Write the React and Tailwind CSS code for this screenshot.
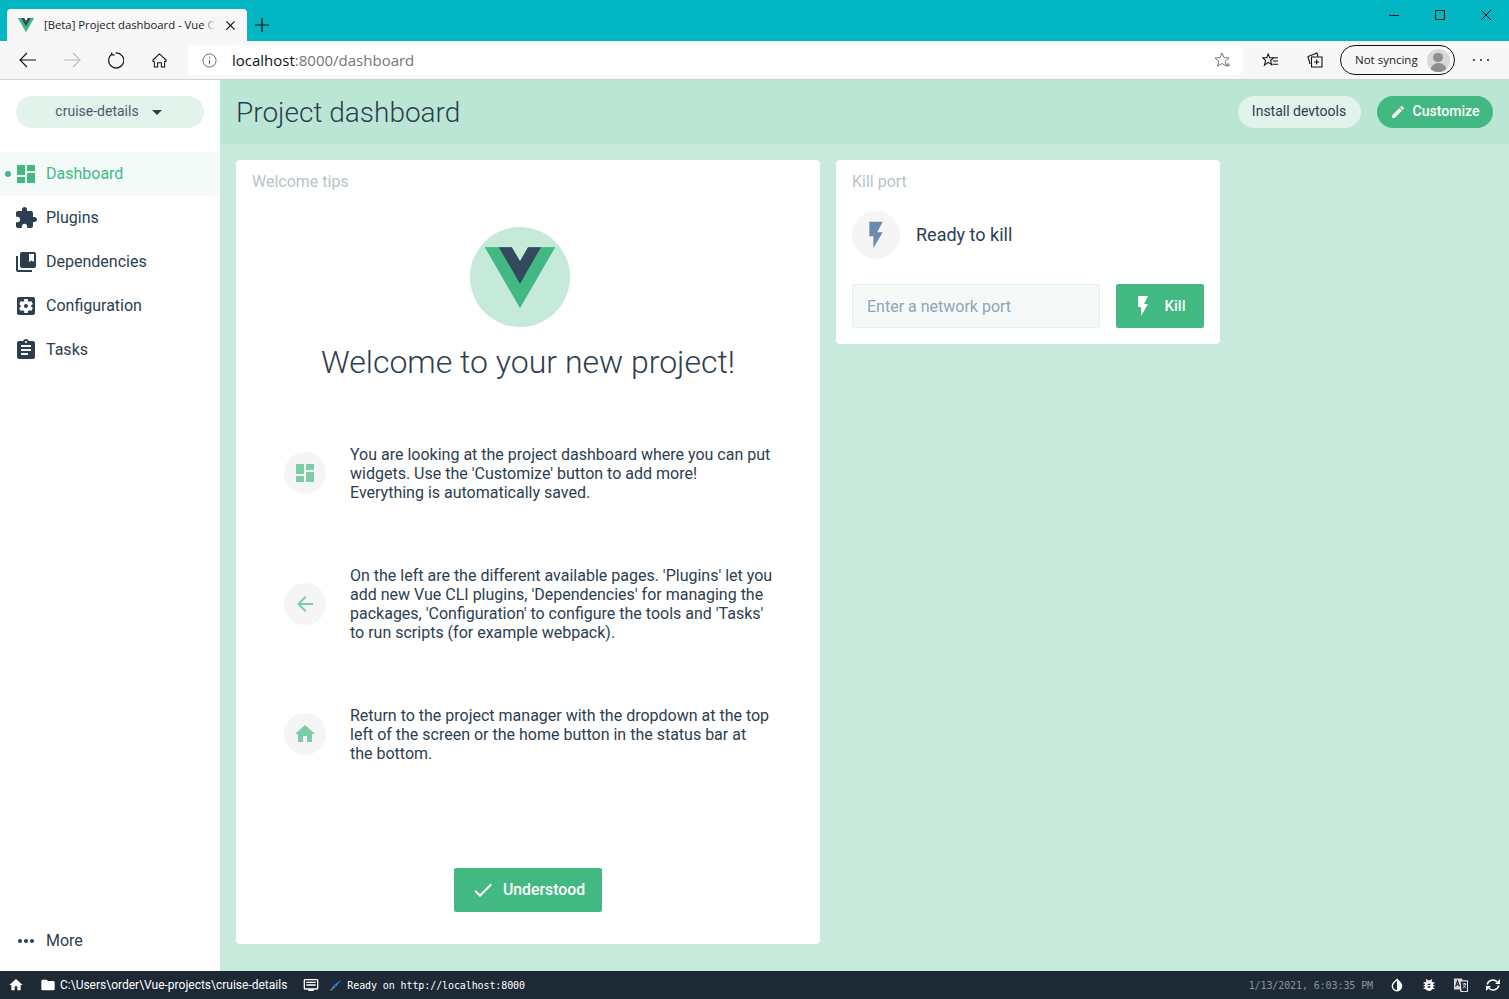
import React from "react";

const paths = {
  dashboard: "M3 13h8V3H3v10zm0 8h8v-6H3v6zm10 0h8V11h-8v10zm0-18v6h8V3h-8z",
  extension: "M20.5 11H19V7c0-1.1-.9-2-2-2h-4V3.5C13 2.12 11.88 1 10.5 1S8 2.12 8 3.5V5H4c-1.1 0-1.99.9-1.99 2v3.8H3.5c1.49 0 2.7 1.21 2.7 2.7s-1.21 2.7-2.7 2.7H2V20c0 1.1.9 2 2 2h3.8v-1.5c0-1.49 1.21-2.7 2.7-2.7 1.49 0 2.7 1.21 2.7 2.7V22H17c1.1 0 2-.9 2-2v-4h1.5c1.38 0 2.5-1.12 2.5-2.5S21.88 11 20.5 11z",
  bookmarks: "M4 6H2v14c0 1.1.9 2 2 2h14v-2H4V6zm16-4H8c-1.1 0-2 .9-2 2v12c0 1.1.9 2 2 2h12c1.1 0 2-.9 2-2V4c0-1.1-.9-2-2-2zm0 10l-2.5-1.5L15 12V4h5v8z",
  settings: "M12 10c-1.1 0-2 .9-2 2s.9 2 2 2 2-.9 2-2-.9-2-2-2zm7-7H5c-1.11 0-2 .9-2 2v14c0 1.1.89 2 2 2h14c1.11 0 2-.9 2-2V5c0-1.1-.89-2-2-2zm-1.75 9c0 .23-.02.46-.05.68l1.48 1.16c.13.11.17.3.08.45l-1.4 2.42c-.09.15-.27.21-.43.15l-1.74-.7c-.36.28-.76.51-1.18.69l-.26 1.85c-.03.17-.18.3-.35.3h-2.8c-.17 0-.32-.13-.35-.29l-.26-1.85c-.43-.18-.82-.41-1.18-.69l-1.74.7c-.16.06-.34 0-.43-.15l-1.4-2.42c-.09-.15-.05-.34.08-.45l1.48-1.16c-.03-.23-.05-.46-.05-.69 0-.23.02-.46.05-.68l-1.48-1.16c-.13-.11-.17-.3-.08-.45l1.4-2.42c.09-.15.27-.21.43-.15l1.74.7c.36-.28.76-.51 1.18-.69l.26-1.85c.03-.17.18-.3.35-.3h2.8c.17 0 .32.13.35.29l.26 1.85c.43.18.82.41 1.18.69l1.74-.7c.16-.06.34 0 .43.15l1.4 2.42c.09.15.05.34-.08.45l-1.48 1.16c.03.23.05.46.05.69z",
  assignment: "M19 3h-4.18C14.4 1.84 13.3 1 12 1c-1.3 0-2.4.84-2.82 2H5c-1.1 0-2 .9-2 2v14c0 1.1.9 2 2 2h14c1.1 0 2-.9 2-2V5c0-1.1-.9-2-2-2zm-7 0c.55 0 1 .45 1 1s-.45 1-1 1-1-.45-1-1 .45-1 1-1zm2 14H7v-2h7v2zm3-4H7v-2h10v2zm0-4H7V7h10v2z",
  flash: "M7 2v11h3v9l7-12h-4l4-8z",
  home: "M10 20v-6h4v6h5v-8h3L12 3 2 12h3v8z",
  back: "M20 11H7.83l5.59-5.59L12 4l-8 8 8 8 1.41-1.41L7.83 13H20v-2z",
  edit: "M3 17.25V21h3.75L17.81 9.94l-3.75-3.75L3 17.25zM20.71 7.04c.39-.39.39-1.02 0-1.41l-2.34-2.34c-.39-.39-1.02-.39-1.41 0l-1.83 1.83 3.75 3.75 1.83-1.83z",
  folder: "M10 4H4c-1.1 0-1.99.9-1.99 2L2 18c0 1.1.9 2 2 2h16c1.1 0 2-.9 2-2V8c0-1.1-.9-2-2-2h-8l-2-2z",
  more: "M6 10c-1.1 0-2 .9-2 2s.9 2 2 2 2-.9 2-2-.9-2-2-2zm12 0c-1.1 0-2 .9-2 2s.9 2 2 2 2-.9 2-2-.9-2-2-2zm-6 0c-1.1 0-2 .9-2 2s.9 2 2 2 2-.9 2-2-.9-2-2-2z",
  bug: "M20 8h-2.81c-.45-.78-1.07-1.45-1.82-1.96L17 4.41 15.59 3l-2.17 2.17C12.96 5.06 12.49 5 12 5c-.49 0-.96.06-1.41.17L8.41 3 7 4.41l1.62 1.63C7.88 6.55 7.26 7.22 6.81 8H4v2h2.09c-.05.33-.09.66-.09 1v1H4v2h2v1c0 .34.04.67.09 1H4v2h2.81c1.04 1.79 2.97 3 5.19 3s4.15-1.21 5.19-3H20v-2h-2.09c.05-.33.09-.66.09-1v-1h2v-2h-2v-1c0-.34-.04-.67-.09-1H20V8zm-6 8h-4v-2h4v2zm0-4h-4v-2h4v2z",
  invert: "M17.66 7.93L12 2.27 6.34 7.93c-3.12 3.12-3.12 8.19 0 11.31C7.9 20.8 9.95 21.58 12 21.58c2.05 0 4.1-.78 5.66-2.34 3.12-3.12 3.12-8.19 0-11.31zM12 19.59c-1.6 0-3.11-.62-4.24-1.76C6.62 16.69 6 15.19 6 13.59s.62-3.11 1.76-4.24L12 5.1v14.49z",
  message: "M21 3H3c-1.1 0-2 .9-2 2v12c0 1.1.9 2 2 2h5v2h8v-2h5c1.1 0 2-.9 2-2V5c0-1.1-.9-2-2-2zm0 14H3V5h18v12zM5 7h14v2H5zm0 4h14v2H5z",
  caret: "M7 10l5 5 5-5z",
  check: "M9 16.17L4.83 12l-1.42 1.41L9 19 21 7l-1.41-1.41z",
};

function Icon({ name, className }) {
  return (
    <svg viewBox="0 0 24 24" className={className} fill="currentColor">
      <path d={paths[name]} />
    </svg>
  );
}

function VueLogo({ className }) {
  return (
    <svg viewBox="0 0 256 221" className={className}>
      <path fill="#42b983" d="M204.8 0H256L128 220.8 0 0h97.92L128 51.2 157.44 0h47.36z" />
      <path fill="#42b983" d="M0 0l128 220.8L256 0h-51.2L128 132.48 50.56 0H0z" />
      <path fill="#35495e" d="M50.56 0L128 133.12 204.8 0h-47.36L128 51.2 97.92 0H50.56z" />
    </svg>
  );
}

function BrowserChrome() {
  return (
    <div className="shrink-0 font-['Open_Sans',sans-serif]">
      {/* Tab strip */}
      <div className="h-[41px] bg-[#02b6c4] flex items-end pl-[7px]">
        <div className="w-[240px] h-[32px] bg-[#f7f7f7] rounded-t-[4px] flex items-center pl-[11px]">
          <VueLogo className="w-[16px] h-[14px] shrink-0" />
          <div className="relative ml-[10px] w-[172px] whitespace-nowrap text-[11.3px] text-[#222]">
            [Beta] Project dashboard - Vue C
            <div className="absolute inset-y-0 right-0 w-[14px] bg-gradient-to-r from-transparent to-[#f7f7f7]" />
          </div>
          <svg viewBox="0 0 10 10" className="ml-[10px] w-[9px] h-[9px]" stroke="#111" strokeWidth="1.3">
            <path d="M0.5 0.5l9 9M9.5 0.5l-9 9" />
          </svg>
        </div>
        <svg viewBox="0 0 14 14" className="ml-[8px] mb-[9px] w-[14px] h-[14px]" stroke="#111" strokeWidth="1.2">
          <path d="M7 0v14M0 7h14" />
        </svg>
        <div className="ml-auto self-start flex mt-[10px] pr-[18px] gap-[36px]">
          <svg viewBox="0 0 10 10" className="w-[10px] h-[10px]" stroke="#111"><path d="M0 5.5h10" /></svg>
          <svg viewBox="0 0 10 10" className="w-[10px] h-[10px]" stroke="#111" fill="none"><path d="M.5.5h9v9h-9z" /></svg>
          <svg viewBox="0 0 10 10" className="w-[10px] h-[10px]" stroke="#111"><path d="M0 0l10 10M10 0L0 10" /></svg>
        </div>
      </div>
      {/* Address toolbar */}
      <div className="h-[39px] bg-[#f7f7f7] border-b border-[#d2d2d2] flex items-center">
        <div className="w-[188px] flex items-center pl-[19px]">
          <svg viewBox="0 0 18 16" className="w-[18px] h-[16px]" fill="none" stroke="#111" strokeWidth="1.1"><path d="M17 8H1M8 1L1 8l7 7" /></svg>
          <svg viewBox="0 0 18 16" className="ml-[26px] w-[18px] h-[16px]" fill="none" stroke="#bbb" strokeWidth="1.1"><path d="M1 8h16M10 1l7 7-7 7" /></svg>
          <svg viewBox="0 0 18 18" className="ml-[26px] w-[17px] h-[17px]" fill="none" stroke="#111" strokeWidth="1.2"><path d="M5.5 2.2A8 8 0 1 0 9 1M5 .5v2.6h3" /></svg>
          <svg viewBox="0 0 16 16" className="ml-[28px] w-[15px] h-[15px]" fill="none" stroke="#111" strokeWidth="1.1"><path d="M8 1L1 7.5V9h1.5v6H6v-4.5h4V15h3.5V9H15V7.5z" /></svg>
        </div>
        <div className="w-[1054px] h-[30px] bg-white rounded-[4px] flex items-center pl-[14px] pr-[12px]">
          <svg viewBox="0 0 16 16" className="w-[15px] h-[15px]" fill="none" stroke="#666"><circle cx="8" cy="8" r="7" /><path d="M8 7v5M8 4v1.6" /></svg>
          <div className="ml-[15px] text-[15px] text-[#111]">
            localhost<span className="text-[#767676]">:8000/dashboard</span>
          </div>
          <svg viewBox="0 0 16 16" className="ml-auto w-[16px] h-[16px]" fill="none" stroke="#777"><path d="M8 1l2 4.6 5 .4-3.8 3.2 1.2 4.9L8 11.5 3.6 14l1.2-4.8L1 6l5-.4z" /><path d="M12 13h4M14 11v4" /></svg>
        </div>
        <svg viewBox="0 0 18 16" className="ml-[20px] w-[17px] h-[15px]" fill="none" stroke="#111" strokeWidth="1.1"><path d="M6.5 1l1.5 4h4.5L9 8l1.2 4.5L6.5 10l-4 3 1.3-5L.6 5h4.4zM12 5h5M11.5 8.5H17M11 12h6" /></svg>
        <svg viewBox="0 0 16 16" className="ml-[28px] w-[16px] h-[16px]" fill="none" stroke="#111" strokeWidth="1.1"><path d="M3 12L1 4.5 10 1l1 3.5" /><path d="M4.5 5h10.5v10H4.5zM9.7 7.5v5M7.2 10h5" /></svg>
        <div className="ml-[17px] w-[115px] h-[30px] border border-[#111] rounded-full flex items-center pl-[14px] text-[11.5px] text-[#222]">
          Not syncing
          <div className="ml-[9px] w-[23px] h-[23px] rounded-full bg-[#d8d8d8] overflow-hidden flex flex-col items-center">
            <div className="mt-[4px] w-[10px] h-[10px] rounded-full bg-[#8f8f8f]" />
            <div className="mt-[1px] w-[17px] h-[10px] rounded-t-full bg-[#8f8f8f]" />
          </div>
        </div>
        <div className="ml-[18px] flex gap-[3px]">
          <div className="w-[2px] h-[2px] rounded-full bg-[#222]" />
          <div className="w-[2px] h-[2px] rounded-full bg-[#222] ml-[2px]" />
          <div className="w-[2px] h-[2px] rounded-full bg-[#222] ml-[2px]" />
        </div>
      </div>
    </div>
  );
}

function NavItem({ icon, label, active }) {
  return (
    <div className={`relative h-[44px] flex items-center pl-[14px] text-[16px] ${active ? "bg-[#f3faf7] text-[#42b983]" : "text-[#2c3e50]"}`}>
      {active && <div className="absolute left-[5px] top-[19px] w-[6px] h-[6px] rounded-full bg-[#42b983]" />}
      <Icon name={icon} className="w-[24px] h-[24px]" />
      <span className="ml-[8px]">{label}</span>
    </div>
  );
}

function Sidebar() {
  return (
    <aside className="w-[220px] shrink-0 bg-white flex flex-col">
      <div className="mx-[16px] mt-[16px] h-[32px] rounded-full bg-[#e2f3ec] flex items-center justify-center text-[14px] text-[#4a5c6c] pl-[4px] pb-[1px]">
        cruise-details
        <Icon name="caret" className="ml-[6px] w-[24px] h-[24px] mt-[1px] text-[#2c3e50]" />
      </div>
      <nav className="mt-[24px]">
        <NavItem icon="dashboard" label="Dashboard" active />
        <NavItem icon="extension" label="Plugins" />
        <NavItem icon="bookmarks" label="Dependencies" />
        <NavItem icon="settings" label="Configuration" />
        <NavItem icon="assignment" label="Tasks" />
      </nav>
      <div className="mt-auto mb-[8px]">
        <NavItem icon="more" label="More" />
      </div>
    </aside>
  );
}

function Tip({ icon, children }) {
  return (
    <div className="flex items-center">
      <div className="w-[42px] h-[42px] mb-[1px] rounded-full bg-[#f5f5f5] flex items-center justify-center shrink-0 text-[#7bcda8]">
        <Icon name={icon} className="w-[24px] h-[24px]" />
      </div>
      <p className="ml-[24px] w-[422.5px] text-[16px] leading-[19px] text-[#2c3e50]">{children}</p>
    </div>
  );
}

function WelcomeCard() {
  return (
    <section className="w-[584px] h-[784px] bg-white rounded-[4px] flex flex-col">
      <h2 className="pl-[16px] pt-[13px] text-[16px] leading-[18px] text-[#b7c4c9]">Welcome tips</h2>
      <div className="mt-[36px] mr-[16px] self-center w-[100px] h-[100px] rounded-full bg-[#c6eada] flex items-center justify-center">
        <VueLogo className="w-[70px] h-[61px] mt-[1px]" />
      </div>
      <h1 className="mt-[15px] text-center text-[32px] leading-[40px] font-light text-[#2c3e50]">
        Welcome to your new project!
      </h1>
      <div className="mt-[63px] pl-[48px] flex flex-col gap-[64px]">
        <Tip icon="dashboard">
          You are looking at the project dashboard where you can put widgets. Use the 'Customize' button to add more! Everything is automatically saved.
        </Tip>
        <Tip icon="back">
          On the left are the different available pages. 'Plugins' let you add new Vue CLI plugins, 'Dependencies' for managing the packages, 'Configuration' to configure the tools and 'Tasks' to run scripts (for example webpack).
        </Tip>
        <Tip icon="home">
          Return to the project manager with the dropdown at the top left of the screen or the home button in the status bar at the bottom.
        </Tip>
      </div>
      <button className="mt-auto mb-[32px] self-center w-[148px] h-[44px] rounded-[2px] bg-[#42b983] text-white text-[15.8px] font-medium flex items-center justify-center">
        <Icon name="check" className="w-[24px] h-[24px] mr-[8px]" />
        Understood
      </button>
    </section>
  );
}

function KillCard() {
  return (
    <section className="w-[384px] h-[184px] bg-white rounded-[4px] px-[16px]">
      <h2 className="pt-[13px] text-[16px] leading-[18px] text-[#b7c4c9]">Kill port</h2>
      <div className="mt-[20px] flex items-center">
        <div className="w-[48px] h-[48px] rounded-full bg-[#f5f5f5] flex items-center justify-center text-[#6a8bad]">
          <Icon name="flash" className="w-[32px] h-[32px]" />
        </div>
        <span className="ml-[16px] text-[18px] text-[#2c3e50] pb-[2px]">Ready to kill</span>
      </div>
      <div className="mt-[25px] flex gap-[16px]">
        <input
          placeholder="Enter a network port"
          className="w-[248px] h-[44px] px-[14px] bg-[#f5faf8] border border-[#e2f3ec] rounded-[2px] text-[16px] placeholder:text-[#8ea4bb] outline-none"
        />
        <button className="w-[88px] h-[44px] rounded-[2px] bg-[#42b983] text-white text-[15px] font-medium flex items-center justify-center pr-[4px]">
          <Icon name="flash" className="w-[24px] h-[24px] mr-[10px]" />
          Kill
        </button>
      </div>
    </section>
  );
}

function StatusBar() {
  return (
    <footer className="h-[28px] shrink-0 bg-[#1d2935] text-white flex items-center pl-[8px] pr-[8px]">
      <Icon name="home" className="w-[16px] h-[16px]" />
      <Icon name="folder" className="ml-[16px] w-[16px] h-[16px]" />
      <span className="ml-[4px] text-[12px]">C:\Users\order\Vue-projects\cruise-details</span>
      <Icon name="message" className="ml-[16px] w-[16px] h-[16px]" />
      <svg viewBox="0 0 12 12" className="ml-[10px] w-[13px] h-[13px]">
        <path fill="#2f8fe0" d="M11.5 .5L5 5.5l1.5 1.5L11.5 .5z" />
        <path fill="#2f8fe0" d="M4.5 5.8L2.6 8.4l1.2 1.1 2.3-2.2z" />
        <path fill="#e8c14a" d="M2.3 8.8L1 11l2.4-1.2z" />
      </svg>
      <span className="ml-[5px] font-['DejaVu_Sans_Mono',monospace] text-[10px] tracking-[-0.1px]">Ready on http://localhost:8000</span>
      <span className="ml-auto font-['DejaVu_Sans_Mono',monospace] text-[10px] tracking-[-0.1px] text-[#8a949c]">1/13/2021, 6:03:35 PM</span>
      <Icon name="invert" className="ml-[16px] w-[16px] h-[16px]" />
      <Icon name="bug" className="ml-[16px] w-[16px] h-[16px]" />
      <svg viewBox="0 0 16 16" className="ml-[16px] w-[16px] h-[16px]">
        <path fill="#d9d9d9" d="M1 1.5h8l.6 2H15v11.5H7.5L6.8 12.5H1z" />
        <path fill="#1d2935" stroke="#fff" strokeWidth=".8" d="M7 4h7.5v10.5H8.2z" />
        <path fill="none" stroke="#1d2935" strokeWidth="1.1" d="M2.6 9.5L4.5 4l1.9 5.5M3.3 7.8h2.4" />
        <path fill="none" stroke="#fff" strokeWidth=".8" d="M9.5 7h4M11.5 6v1M12.7 7c-.4 1.8-1.4 3-2.9 4M10.5 8.5c.5 1 1.3 1.8 2.7 2.3" />
      </svg>
      <svg viewBox="0 0 16 16" className="ml-[16px] w-[16px] h-[16px]" fill="none" stroke="#fff" strokeWidth="1.4">
        <path d="M2.2 7.5A5.8 5.8 0 0 1 12 4.8M13.8 8.5A5.8 5.8 0 0 1 4 11.2" />
        <path fill="#fff" stroke="none" d="M15 2v5h-5zM1 14V9h5z" />
      </svg>
    </footer>
  );
}

export default function App() {
  return (
    <div className="h-screen flex flex-col overflow-hidden font-[Roboto,sans-serif]">
      <BrowserChrome />
      <div className="flex-1 min-h-0 flex">
        <Sidebar />
        <main className="flex-1 flex flex-col bg-[#c7eadd]">
          <header className="h-[64px] shrink-0 bg-[#bbe6d5] flex items-center pl-[16px] pr-[16px]">
            <div className="text-[28px] font-light text-[#2c3e50] pt-[2px]">Project dashboard</div>
            <button className="ml-auto w-[123px] h-[32px] rounded-full bg-[#e2f3ec] text-[14px] text-[#2c3e50] pb-[2px] pr-[1px]">Install devtools</button>
            <button className="ml-[16px] w-[116px] h-[32px] rounded-full bg-[#42b983] text-white text-[14px] font-medium flex items-center justify-center pb-[1px] pr-[1px]">
              <Icon name="edit" className="w-[16px] h-[16px] mr-[7px]" />
              Customize
            </button>
          </header>
          <div className="p-[16px] flex items-start gap-[16px]">
            <WelcomeCard />
            <KillCard />
          </div>
        </main>
      </div>
      <StatusBar />
    </div>
  );
}
